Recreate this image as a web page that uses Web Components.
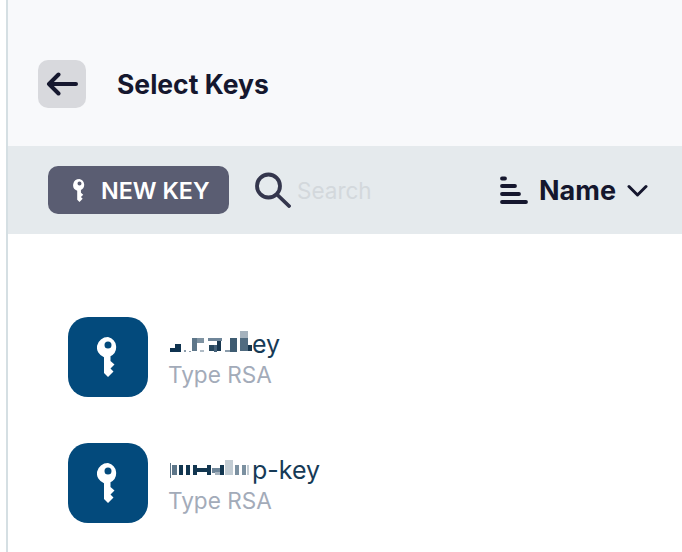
<!DOCTYPE html>
<html>
<head>
<meta charset="utf-8">
<style>
  html, body { margin: 0; height: 100%; background: #ffffff; overflow: hidden; }
  body { font-family: Inter, "Noto Sans", sans-serif; }
</style>
</head>
<body>
<key-select-panel>
  <panel-header slot="header" title="Select Keys"></panel-header>
  <key-toolbar slot="toolbar"></key-toolbar>
  <key-row mask="a" tail="ey"></key-row>
  <key-row mask="b" tail="p-key"></key-row>
</key-select-panel>

<script>
'use strict';

const KEY_PATH = 'M11 0a11 10.500 0 0 0-4 20.300V36l4 4 5.500-5.500-3-3 4-4-4-3.500v-4.700A11 10.500 0 0 0 11 0zm0 4.500a3.500 3.500 0 1 1 0 7 3.500 3.500 0 0 1 0-7z';

class KeySelectPanel extends HTMLElement {
  constructor() {
    super();
    this.attachShadow({ mode: 'open' });
    this.shadowRoot.innerHTML = `
      <style>
        :host {
          display: block;
          height: 552px;
          margin-left: 6px;
          border-left: 2px solid #d5dfe3;
          background-color: #ffffff;
        }
        #list {
          display: flex;
          flex-direction: column;
          gap: 46px;
          padding: 83px 0 0 60px;
        }
      </style>
      <slot name="header"></slot>
      <slot name="toolbar"></slot>
      <div id="list"><slot></slot></div>
    `;
  }
}

class PanelHeader extends HTMLElement {
  constructor() {
    super();
    this.attachShadow({ mode: 'open' });
    this.shadowRoot.innerHTML = `
      <style>
        :host {
          display: flex;
          align-items: center;
          gap: 31px;
          box-sizing: border-box;
          height: 146px;
          padding: 22px 0 0 30px;
          background-color: #f8f9fb;
        }
        button {
          display: flex;
          align-items: center;
          justify-content: center;
          width: 48px;
          height: 48px;
          padding: 0;
          border: 0;
          border-radius: 10px;
          background-color: #d8d9dd;
        }
        h1 {
          margin: 0;
          font-size: 26.500px;
          font-weight: 700;
          color: #15172e;
        }
      </style>
      <button aria-label="Back">
        <svg width="32" height="24" viewBox="0 0 32 24" fill="none" stroke="#15172e" stroke-width="4" stroke-linecap="round" stroke-linejoin="round">
          <path d="M30 12H3M12.500 2.500L3 12l9.500 9.500"/>
        </svg>
      </button>
      <h1></h1>
    `;
  }
  connectedCallback() {
    this.shadowRoot.querySelector('h1').textContent = this.getAttribute('title');
  }
}

class KeyToolbar extends HTMLElement {
  constructor() {
    super();
    this.attachShadow({ mode: 'open' });
    this.shadowRoot.innerHTML = `
      <style>
        :host {
          display: flex;
          align-items: center;
          box-sizing: border-box;
          height: 88px;
          padding: 0 34px 0 40px;
          background-color: #e5eaed;
        }
        button {
          display: flex;
          align-items: center;
          gap: 15px;
          box-sizing: border-box;
          width: 181px;
          height: 48px;
          padding: 0 0 0 25px;
          border: 0;
          border-radius: 10px;
          background-color: #5a5d72;
          color: #ffffff;
          font: 600 23.300px Inter, "Noto Sans", sans-serif;
        }
        #search {
          display: flex;
          align-items: center;
          gap: 6px;
          margin-left: 25px;
          flex: 1;
          font-size: 22.500px;
          color: #d3d8dc;
        }
        #sort {
          display: flex;
          align-items: center;
          gap: 11px;
          font-size: 27px;
          font-weight: 700;
          color: #15172e;
        }
      </style>
      <button>
        <svg width="13" height="23" viewBox="0 0 22 40" fill="#ffffff"><path fill-rule="evenodd" d="${KEY_PATH}"/></svg>
        NEW KEY
      </button>
      <div id="search">
        <svg width="37" height="36" viewBox="0 0 37 36" fill="none" stroke="#34364d" stroke-width="3.800" stroke-linecap="round">
          <circle cx="14.500" cy="14" r="11.500"/>
          <path d="M23 22.500L35 34"/>
        </svg>
        <span>Search</span>
      </div>
      <div id="sort">
        <svg width="28" height="28" viewBox="0 0 28 28" fill="none" stroke="#15172e" stroke-width="3.800" stroke-linecap="round">
          <path d="M2 2.500h3M2 10h13M2 18h17M2 26h24"/>
        </svg>
        <span>Name</span>
        <svg width="21" height="13" viewBox="0 0 21 13" fill="none" stroke="#15172e" stroke-width="3" stroke-linecap="round" stroke-linejoin="round">
          <path d="M2 2.500l8.500 8.500L19 2.500"/>
        </svg>
      </div>
    `;
  }
}

// the key names are mosaic-blurred in the picture, these are the blocks: [x, y, w, h, colour]
const MASKS = {
  a: [
    [5,19,11,4,'#0f3350'],[10,15,6,4,'#0f3350'],[19,21,2,2,'#8b9cab'],[24,22,2,1,'#8b9cab'],
    [27,9,5,13,'#5d7689'],[32,9,7,5,'#7f93a2'],[35,21,4,2,'#b0bcc6'],
    [43,9,14,3,'#6f8699'],[44,16,5,6,'#27475e'],[49,16,3,7,'#46627a'],[52,12,4,10,'#18374f'],
    [60,21,5,2,'#8b9cab'],[65,9,7,14,'#3f5c72'],
    [75,2,8,7,'#a5b2bd'],[75,9,8,13,'#506b80'],[83,16,4,6,'#18374f']
  ],
  b: [
    [5,8,1,15,'#5d7689'],[7,10,5,10,'#5d7689'],[14,10,4,10,'#123650'],[21,10,4,10,'#123650'],
    [28,10,4,10,'#123650'],[32,13,10,4,'#123650'],[42,10,4,10,'#123650'],[47,13,8,5,'#6f8699'],
    [50,17,5,3,'#a5b2bd'],[55,10,4,10,'#123650'],[60,5,8,15,'#c2ccd3'],[70,10,4,10,'#7b90a0'],
    [77,10,4,10,'#7b90a0'],[82,10,2,10,'#c2ccd3']
  ]
};

class KeyRow extends HTMLElement {
  constructor() {
    super();
    this.attachShadow({ mode: 'open' });
    this.shadowRoot.innerHTML = `
      <style>
        :host {
          display: flex;
          align-items: center;
          gap: 20px;
          height: 80px;
        }
        #icon {
          display: flex;
          align-items: center;
          justify-content: center;
          width: 80px;
          height: 80px;
          border-radius: 20px;
          background-color: #034a7c;
        }
        #text { padding-top: 4px; }
        #name {
          display: flex;
          align-items: flex-start;
          height: 28px;
          font-size: 25px;
          line-height: 28px;
          color: #163a56;
        }
        #mask { flex: none; margin: -1px 0 0 1px; }
        #type {
          margin-top: 3px;
          font-size: 22.600px;
          line-height: 28px;
          color: #a3abb9;
        }
      </style>
      <div id="icon">
        <svg width="22" height="40" viewBox="0 0 22 40" fill="#ffffff"><path fill-rule="evenodd" d="${KEY_PATH}"/></svg>
      </div>
      <div id="text">
        <div id="name">
          <svg id="mask" width="83" height="30" viewBox="4 0 83 30" shape-rendering="crispEdges"></svg>
          <span id="tail"></span>
        </div>
        <div id="type">Type RSA</div>
      </div>
    `;
  }
  connectedCallback() {
    let mask = this.shadowRoot.querySelector('#mask');
    let rects = '';
    for (let [x, y, w, h, colour] of MASKS[this.getAttribute('mask')]) {
      rects += `<rect x="${x}" y="${y}" width="${w}" height="${h}" fill="${colour}"/>`;
    }
    mask.innerHTML = rects;
    this.shadowRoot.querySelector('#tail').textContent = this.getAttribute('tail');
  }
}

window.customElements.define('key-select-panel', KeySelectPanel);
window.customElements.define('panel-header', PanelHeader);
window.customElements.define('key-toolbar', KeyToolbar);
window.customElements.define('key-row', KeyRow);
</script>
</body>
</html>
